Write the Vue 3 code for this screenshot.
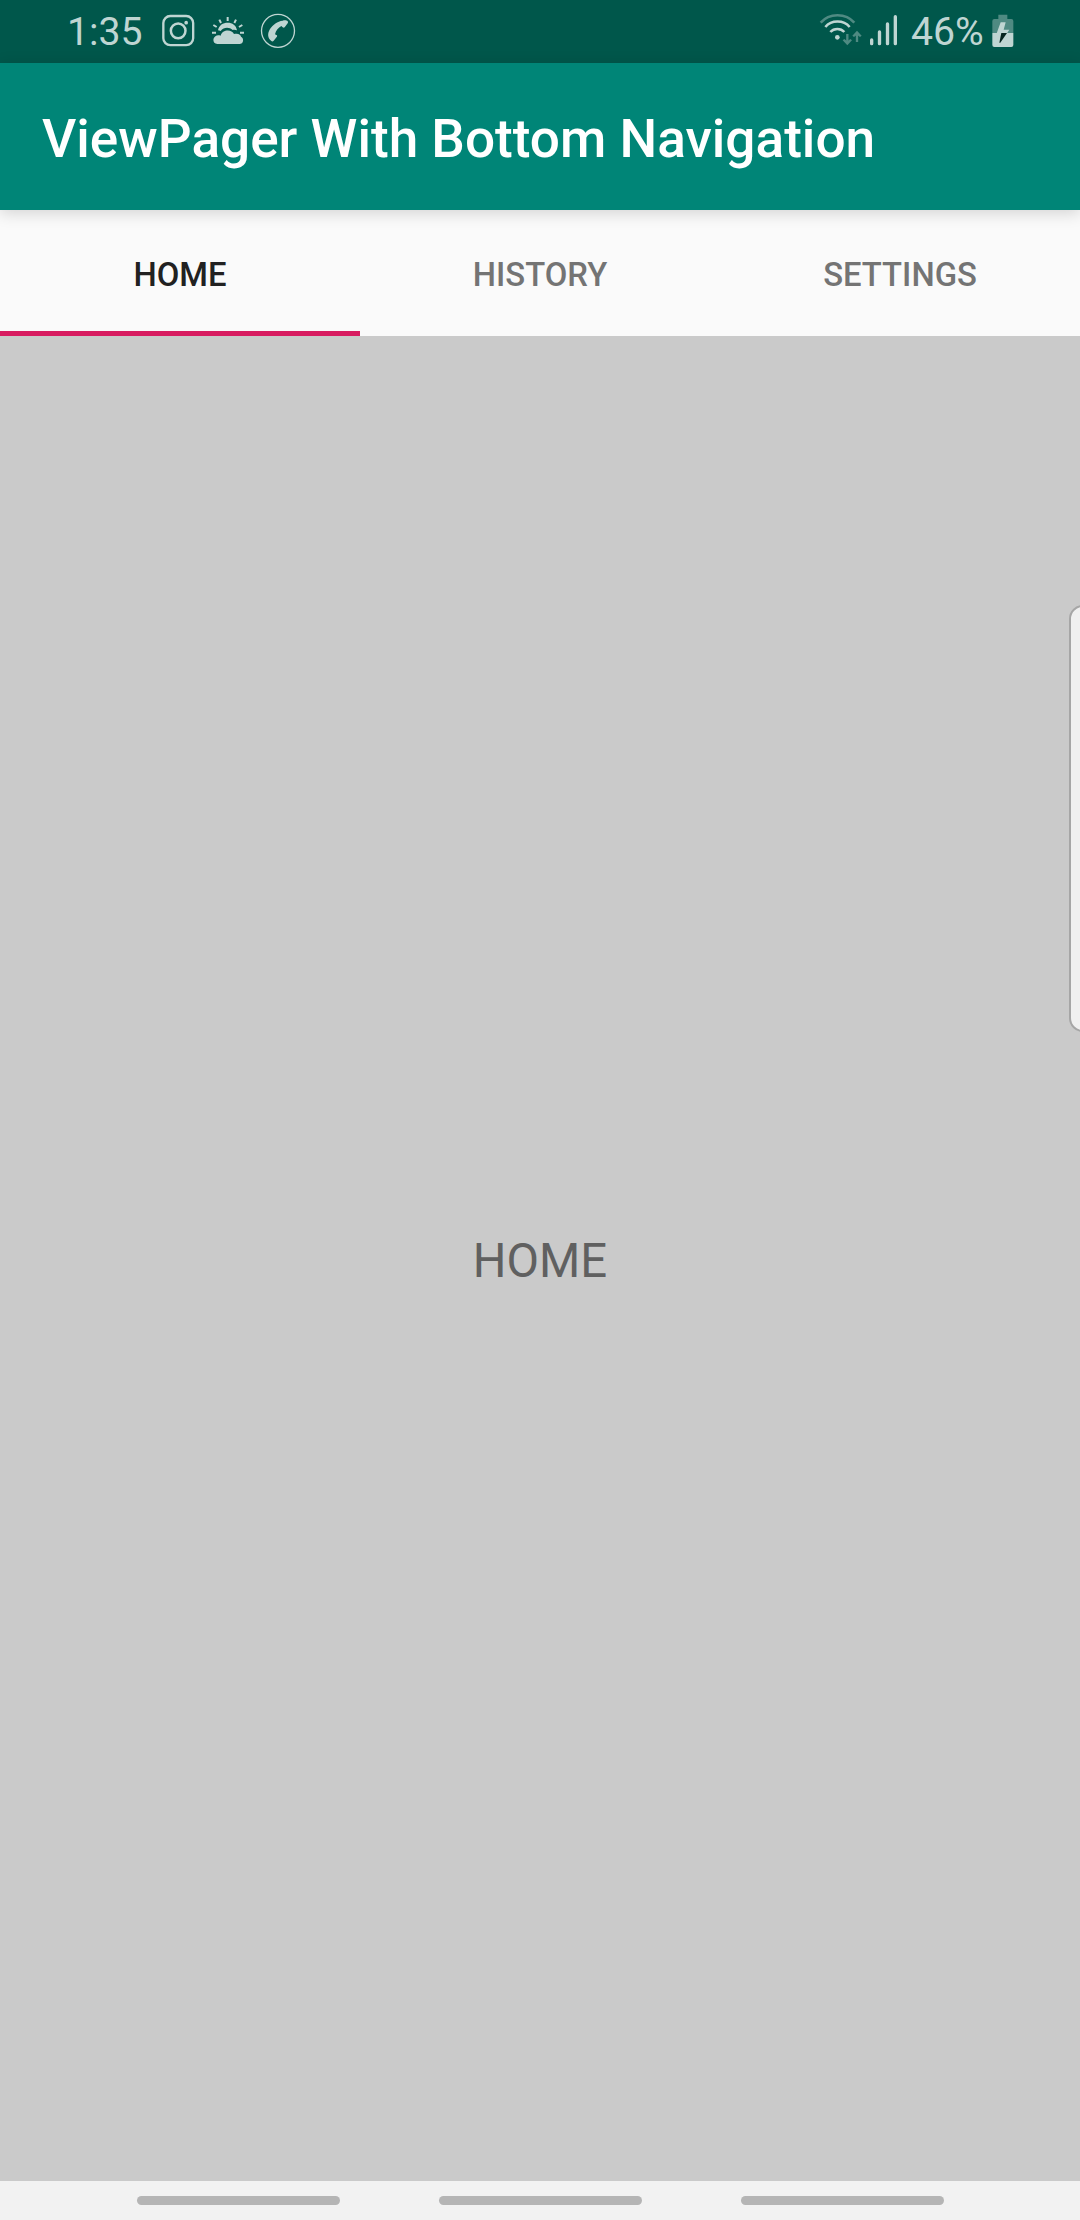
<script setup>
import { ref } from 'vue'

const tabs = ['HOME', 'HISTORY', 'SETTINGS']
const active = ref(0)
</script>

<template>
  <div class="screen">
    <div class="status">
      <div class="left">
        <span class="time">1:35</span>
        <!-- Icon view boxes use three units per pixel -->
        <svg class="insta" width="34" height="63" viewBox="333 0 102 189" fill="none" stroke="#bfd5d2">
          <rect x="340" y="48" width="89.500" height="87.500" rx="21" stroke-width="7" />
          <circle cx="384.500" cy="92.500" r="22" stroke-width="7.500" />
          <circle cx="408.500" cy="68" r="5.500" fill="#bfd5d2" stroke="none" />
        </svg>
        <svg class="weather" width="34" height="63" viewBox="483 0 102 189" fill="#bfd5d2">
          <g stroke="#bfd5d2" stroke-width="6">
            <path d="M533 51v12M508 59l5 10M558 59l-5 10M490 75l10 6M577 75l-10 6M486 98.500h12M570 98.500h12" />
          </g>
          <path d="M504 91C507 75 519 68 533 68c14 0 26 8 28 23-5-2-9-2-13-1-10-9-27-9-36 3-3-1-5-2-8-2z" />
          <path d="M502 132c-16 0-16-24 2-26 3 0 6 0 8 1 4-19 33-21 40-5 13-3 20 2 21 8 10 5 8 22-5 22z" />
        </svg>
        <svg class="phone" width="36" height="63" viewBox="630 0 108 189">
          <circle cx="684" cy="92.500" r="49.500" fill="none" stroke="#bfd5d2" stroke-width="4" />
          <path fill="#bfd5d2" d="M698 62c6-2 12-1 15 2 2 2 1 4 0 6l-9 12c-2 2-4 2-6 0l-4-4c-9 5-16 13-19 25l4 2c3 1 3 4 1 6l-9 11c-2 3-5 3-7 1-12-9-12-23-4-36 9-13 22-23 38-25z" />
        </svg>
      </div>
      <div class="right">
        <svg class="wifi" width="44" height="63" viewBox="57 0 132 189" fill="none" stroke="#bfd5d2">
          <path d="M62 68C87 38 138 38 163 68" stroke="#4f8a82" stroke-width="7.500" />
          <path d="M76 81C94 59 131 59 149 81" stroke-width="7.500" />
          <path d="M91 96C102 84 122 84 133 96" stroke-width="7.500" />
          <circle cx="112" cy="112" r="7" fill="#bfd5d2" stroke="none" />
          <path d="M142 102v26M171 126V100" stroke="#4f8a82" stroke-width="7" />
          <path d="M128 121l5-4 9 7 9-7 5 4-14 15zM157 107l5 4 9-7 9 7 5-4-14-15z" fill="#4f8a82" stroke="none" />
        </svg>
        <svg class="signal" width="29" height="63" viewBox="207 0 87 189" stroke="#bfd5d2" stroke-width="10" stroke-linecap="round">
          <path d="M215 120v11M238.500 96v35M262.500 72v59M286 50v81" />
        </svg>
        <span class="percent">46%</span>
        <svg class="battery" width="22" height="63" viewBox="575 0 66 189">
          <path fill="#4f8a82" d="M594 44h27v13h12q6 0 6 6v36h-63V63q0-6 6-6h12z" />
          <path fill="#bfd5d2" d="M576 99h63v36q0 6-6 6h-51q-6 0-6-6z" />
          <path fill="#bfd5d2" d="M601 67h15l-6 22h17l-7 11h-31z" />
          <path fill="#06251f" d="M603 99h17l-20 29h-3z" />
        </svg>
      </div>
    </div>

    <header class="appbar"><h1>ViewPager With Bottom Navigation</h1></header>

    <nav class="tabs">
      <button v-for="(tab, i) in tabs" :key="tab" class="tab" :class="{ on: i === active }" @click="active = i">
        {{ tab }}
      </button>
    </nav>

    <main class="page">
      <p>{{ tabs[active] }}</p>
      <div class="edge"><div class="handle"></div></div>
    </main>

    <footer class="navbar"><i></i><i></i><i></i></footer>
  </div>
</template>

<style>
body { margin: 0; }
</style>

<style scoped>
.screen {
  width: 1080px;
  height: 2220px;
  display: flex;
  flex-direction: column;
  overflow: hidden;
  font-family: Roboto, sans-serif;
}
.status {
  height: 63px;
  display: flex;
  justify-content: space-between;
  background: #00574b;
  color: #bfd5d2;
  font-size: 39.200px;
  line-height: 65px;
}
.left { display: flex; padding-left: 67px; }
.right { display: flex; padding-right: 66px; }
.time { width: 94px; }
.weather { margin-left: 16px; }
.phone { margin-left: 15px; }
.signal { margin-left: 6px; }
.percent { width: 81px; margin-left: 13px; }
.appbar {
  position: relative;
  z-index: 1;
  height: 142px;
  padding: 5px 0 0 42px;
  display: flex;
  align-items: center;
  background: #008577;
  box-shadow: 0 3px 15px rgba(0, 0, 0, 0.16);
}
.appbar h1 {
  margin: 0;
  color: #fff;
  font-size: 53.150px;
  font-weight: 500;
  white-space: nowrap;
}
.tabs { height: 126px; display: flex; background: #fafafa; }
.tab {
  flex: 1;
  padding: 8px 0 0;
  border: 0;
  border-bottom: 5px solid transparent;
  background: none;
  font: 500 32.800px Roboto, sans-serif;
  color: #747474;
}
.tab.on { color: #212121; border-bottom-color: #d81b60; }
.page {
  position: relative;
  flex: 1;
  display: flex;
  align-items: center;
  justify-content: center;
  background: #cacaca;
}
.page p { margin: 5px 0 0; font-size: 47.250px; color: #606060; }
.edge {
  position: absolute;
  top: 269px;
  right: 0;
  width: 11px;
  height: 427px;
  overflow: hidden;
}
.handle {
  width: 40px;
  height: 427px;
  box-sizing: border-box;
  border: 2px solid #a6a6a6;
  border-radius: 14px;
  background: #f0f0f0;
}
.navbar {
  height: 39px;
  display: flex;
  align-items: center;
  justify-content: center;
  gap: 99px;
  background: #f2f2f2;
}
.navbar i { width: 203px; height: 9px; border-radius: 5px; background: #b5b5b5; }
</style>
